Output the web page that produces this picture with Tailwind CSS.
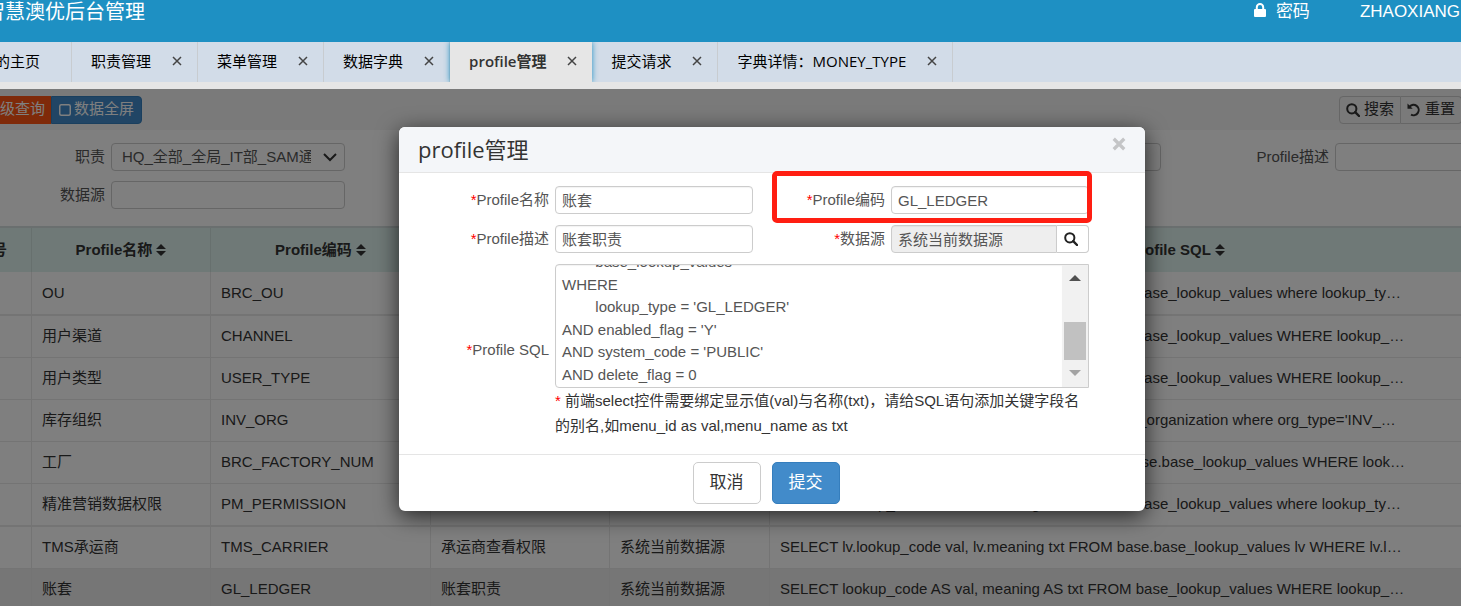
<!DOCTYPE html>
<html lang="zh-CN">
<head>
<meta charset="utf-8">
<title>profile管理</title>
<script src="https://cdn.jsdelivr.net/npm/@tailwindcss/browser@4"></script>
</head>
<body class="overflow-hidden bg-white font-['Liberation_Sans','Noto_Sans_CJK_SC',sans-serif] text-[15px] text-[#333]">
<svg class="hidden" aria-hidden="true">
  <symbol id="close" viewBox="0 0 10 10"><path d="M1 1l8 8M9 1L1 9" stroke="#444" stroke-width="1.5" fill="none"/></symbol>
  <symbol id="search" viewBox="0 0 14 14"><circle cx="5.8" cy="5.8" r="4.6" fill="none" stroke="currentColor" stroke-width="2"/><path d="M9.2 9.2l3.8 3.8" stroke="currentColor" stroke-width="2.4" stroke-linecap="round"/></symbol>
  <symbol id="sort" viewBox="0 0 10 12"><path d="M5 0l5 5H0zM5 12l5-5H0z" fill="currentColor"/></symbol>
</svg>
<div class="relative -ml-12 -mr-[123px] h-screen overflow-hidden">
  <header class="flex h-[42px] items-start justify-between bg-[#1e90c3] pl-[33px] pr-[124px] text-white">
    <h1 class="font-['Open_Sans','Noto_Sans_CJK_SC',sans-serif] text-xl leading-6">智慧澳优后台管理</h1>
    <nav class="flex items-center gap-[50px] text-[17px] leading-6">
      <a href="#" class="flex items-center gap-[10px]">
        <svg class="mb-1 h-[14px] w-3" viewBox="0 0 12 14" aria-hidden="true"><path d="M2.8 7V4.2a3.2 3.2 0 0 1 6.4 0V7" fill="none" stroke="white" stroke-width="2"/><rect y="6" width="12" height="8" rx="1" fill="white"/></svg>密码</a>
      <a href="#">ZHAOXIANG</a>
    </nav>
  </header>

  <nav class="flex h-10 bg-[#d2dce8] font-['Open_Sans','Noto_Sans_CJK_SC',sans-serif] text-black">
    <div class="flex items-center border-r border-[#c8ccd0] pb-0.5 pl-7 pr-[31px]"><a href="#">我的主页</a></div>
    <div class="flex items-center gap-[21px] border-r border-[#c8ccd0] pb-0.5 pl-[19px] pr-[15px]"><a href="#">职责管理</a><button aria-label="关闭"><svg class="size-[10px]"><use href="#close"/></svg></button></div>
    <div class="flex items-center gap-[21px] border-r border-[#c8ccd0] pb-0.5 pl-[19px] pr-[15px]"><a href="#">菜单管理</a><button aria-label="关闭"><svg class="size-[10px]"><use href="#close"/></svg></button></div>
    <div class="flex items-center gap-[21px] border-r border-[#c8ccd0] pb-0.5 pl-[19px] pr-[15px]"><a href="#">数据字典</a><button aria-label="关闭"><svg class="size-[10px]"><use href="#close"/></svg></button></div>
    <div class="relative flex items-center gap-[21px] bg-[#e6e6e6] pb-0.5 pl-[19px] pr-[15px] shadow-[0_0_6px_#1e90c3] [clip-path:inset(0_-8px)]"><a href="#" class="font-semibold text-[#333]">profile管理</a><button aria-label="关闭"><svg class="size-[10px]"><use href="#close"/></svg></button></div>
    <div class="flex items-center gap-[21px] border-r border-[#c8ccd0] pb-0.5 pl-[19px] pr-[15px]"><a href="#">提交请求</a><button aria-label="关闭"><svg class="size-[10px]"><use href="#close"/></svg></button></div>
    <div class="flex items-center gap-[21px] border-r border-[#c8ccd0] pb-0.5 pl-[19px] pr-[15px]"><a href="#">字典详情：MONEY_TYPE</a><button aria-label="关闭"><svg class="size-[10px]"><use href="#close"/></svg></button></div>
  </nav>
  <div class="h-[7px] bg-[#e6e6e6]"></div>

  <main class="relative h-[calc(100vh-89px)] overflow-hidden">
    <div class="flex h-[41px] items-center justify-between bg-[#f4f4f4] pl-6 pr-[122px]">
      <div class="flex h-7 text-white">
        <button class="bg-[#ff5513] pl-[9px] pr-[6px]">高级查询</button>
        <button class="flex items-center gap-[3px] rounded-r border border-[#357ebd] bg-[#428bca] px-[7px]"><svg class="size-3" viewBox="0 0 12 12" aria-hidden="true"><rect x=".75" y=".75" width="10.5" height="10.5" rx="1.5" fill="none" stroke="white" stroke-width="1.5"/></svg>数据全屏</button>
      </div>
      <div class="flex h-7">
        <button class="flex items-center gap-1 rounded-l border border-[#ccc] px-[6px]"><svg class="size-[14px]" aria-hidden="true"><use href="#search"/></svg>搜索</button>
        <button class="flex items-center gap-1 rounded-r border border-l-0 border-[#ccc] px-[6px]"><svg class="size-[14px]" viewBox="0 0 14 14" aria-hidden="true"><path d="M2.6 3.6A5.2 5.2 0 1 1 4 11.6" fill="none" stroke="currentColor" stroke-width="2"/><path d="M.5.5v5.2h5.2z" fill="currentColor"/></svg>重置</button>
      </div>
    </div>

    <form class="grid grid-cols-4 gap-y-[10px] bg-white pb-[17px] pt-[13px] text-[#555]">
      <div class="flex h-7 items-center gap-[6px] pr-[15px]">
        <label for="duty" class="w-[153px] shrink-0 text-right">职责</label>
        <div class="relative h-7 flex-1">
          <select id="duty" class="h-7 w-full appearance-none rounded border border-[#ccc] bg-white pl-[10px] pr-[33px]"><option>HQ_全部_全局_IT部_SAM通用职责</option></select>
          <svg class="pointer-events-none absolute right-2 top-[10px] h-[9px] w-[14px]" viewBox="0 0 14 9" aria-hidden="true"><path d="M1 1l6 6 6-6" fill="none" stroke="#333" stroke-width="2"/></svg>
        </div>
      </div>
      <div class="flex h-7 items-center gap-[6px] pr-[15px]"><label for="q-name" class="w-[153px] shrink-0 text-right">Profile名称</label><input id="q-name" class="h-7 w-full rounded border border-[#ccc] px-[6px]"></div>
      <div class="flex h-7 items-center gap-[6px] pr-[15px]"><label for="q-code" class="w-[153px] shrink-0 text-right">Profile编码</label><input id="q-code" class="h-7 w-full rounded border border-[#ccc] px-[6px]"></div>
      <div class="flex h-7 items-center gap-[6px] pr-[15px]"><label for="q-desc" class="w-[153px] shrink-0 text-right">Profile描述</label><input id="q-desc" class="h-7 w-full rounded border border-[#ccc] px-[6px]"></div>
      <div class="flex h-7 items-center gap-[6px] pr-[15px]"><label for="q-src" class="w-[153px] shrink-0 text-right">数据源</label><input id="q-src" class="h-7 w-full rounded border border-[#ccc] px-[6px]"></div>
    </form>

    <table class="w-full table-fixed border-collapse whitespace-nowrap bg-white [&_td]:border-l [&_td]:border-[#e9e9e9] [&_td]:px-[10px] [&_th]:border-l [&_th]:border-[#cfe0dd]">
      <colgroup><col class="w-[79px]"><col class="w-[179px]"><col class="w-[220px]"><col class="w-[179px]"><col class="w-[160px]"><col></colgroup>
      <thead>
        <tr class="h-[45px] border-t-2 border-[#d4dede] bg-[#def2ef] font-bold">
          <th>序号</th>
          <th>Profile名称 <svg class="inline h-3 w-[10px] align-[-1px]"><use href="#sort"/></svg></th>
          <th>Profile编码 <svg class="inline h-3 w-[10px] align-[-1px]"><use href="#sort"/></svg></th>
          <th>Profile描述 <svg class="inline h-3 w-[10px] align-[-1px]"><use href="#sort"/></svg></th>
          <th>数据源 <svg class="inline h-3 w-[10px] align-[-1px]"><use href="#sort"/></svg></th>
          <th>Profile SQL <svg class="inline h-3 w-[10px] align-[-1px]"><use href="#sort"/></svg></th>
        </tr>
      </thead>
      <tbody>
        <tr class="h-[43px] border-b-2 border-[#e9e9e9]"><td></td><td>OU</td><td>BRC_OU</td><td>OU</td><td>系统当前数据源</td><td>SELECT lookup_code AS val, meaning AS txt FROM base_lookup_values where lookup_ty…</td></tr>
        <tr class="h-[42px] border-b border-[#e9e9e9]"><td></td><td>用户渠道</td><td>CHANNEL</td><td>用户渠道</td><td>系统当前数据源</td><td>SELECT lookup_code AS val, meaning AS txt FROM base_lookup_values WHERE lookup_…</td></tr>
        <tr class="h-[42px] border-b border-[#e9e9e9]"><td></td><td>用户类型</td><td>USER_TYPE</td><td>用户类型</td><td>系统当前数据源</td><td>SELECT lookup_code AS val, meaning AS txt FROM base_lookup_values WHERE lookup_…</td></tr>
        <tr class="h-[42px] border-b border-[#e9e9e9]"><td></td><td>库存组织</td><td>INV_ORG</td><td>库存组织</td><td>系统当前数据源</td><td>SELECT org_code AS val, org_name as txt from base_organization where org_type='INV_…</td></tr>
        <tr class="h-[42px] border-b border-[#e9e9e9]"><td></td><td>工厂</td><td>BRC_FACTORY_NUM</td><td>工厂</td><td>系统当前数据源</td><td>SELECT lookup_code as val,meaning as txt FROM base.base_lookup_values WHERE look…</td></tr>
        <tr class="h-[43px] border-b-2 border-[#e9e9e9]"><td></td><td>精准营销数据权限</td><td>PM_PERMISSION</td><td>精准营销</td><td>系统当前数据源</td><td>SELECT lookup_code AS val, meaning AS txt FROM base_lookup_values where lookup_ty…</td></tr>
        <tr class="h-[42px] border-b border-[#e9e9e9]"><td></td><td>TMS承运商</td><td>TMS_CARRIER</td><td>承运商查看权限</td><td>系统当前数据源</td><td>SELECT lv.lookup_code val, lv.meaning txt FROM base.base_lookup_values lv WHERE lv.l…</td></tr>
        <tr class="h-[42px] border-b border-[#e9e9e9] bg-[#ececec]"><td></td><td>账套</td><td>GL_LEDGER</td><td>账套职责</td><td>系统当前数据源</td><td>SELECT lookup_code AS val, meaning AS txt FROM base_lookup_values WHERE lookup_…</td></tr>
      </tbody>
    </table>

    <div class="absolute inset-0 flex items-start justify-center bg-black/50 pl-2 pt-[38px]">
      <section role="dialog" aria-labelledby="dlg-title" class="w-[746px] rounded-md bg-white shadow-[0_5px_22px_rgba(0,0,0,0.7)]">
        <div class="flex h-[46px] items-start justify-between rounded-t-md border-b border-[#e5e5e5] bg-[#f4f6f9] pl-[19px] pr-[19px]">
          <h2 id="dlg-title" class="font-['Open_Sans','Noto_Sans_CJK_SC',sans-serif] text-[22px] leading-[44px]">profile管理</h2>
          <button aria-label="关闭" class="mt-[10px]"><svg class="size-[14px]" viewBox="0 0 12 12"><path d="M1.5 1.5l9 9M10.5 1.5l-9 9" stroke="#c4c5c7" stroke-width="2.8"/></svg></button>
        </div>
        <form class="flex flex-col gap-[11px] pb-4 pr-14 pt-[13px] text-[#555]">
          <div class="flex">
            <div class="flex flex-1 items-center gap-[6px]"><label for="name" class="w-[150px] text-right"><span class="text-[#f00]">*</span>Profile名称</label><input id="name" value="账套" class="h-7 w-0 flex-1 rounded border border-[#ccc] px-[6px] pb-0.5 inset-shadow-xs"></div>
            <div class="relative flex w-[336px] items-center gap-[6px]"><label for="code" class="w-[132px] text-right"><span class="text-[#f00]">*</span>Profile编码</label><input id="code" value="GL_LEDGER" class="h-7 w-0 flex-1 rounded border border-[#ccc] px-[6px] inset-shadow-xs">
              <div class="pointer-events-none absolute -bottom-[9px] -right-[3px] -top-[15px] left-[19px] rounded-[5px] border-5 border-[#ff1e12]"></div>
            </div>
          </div>
          <div class="flex">
            <div class="flex flex-1 items-center gap-[6px]"><label for="desc" class="w-[150px] text-right"><span class="text-[#f00]">*</span>Profile描述</label><input id="desc" value="账套职责" class="h-7 w-0 flex-1 rounded border border-[#ccc] px-[6px] pb-0.5 inset-shadow-xs"></div>
            <div class="flex w-[336px] items-center"><label for="src" class="mr-[6px] w-[132px] text-right"><span class="text-[#f00]">*</span>数据源</label><input id="src" readonly value="系统当前数据源" class="h-7 w-0 flex-1 rounded-l border border-[#ccc] bg-[#eee] px-[6px] pb-0.5 inset-shadow-xs"><button type="button" aria-label="选择数据源" class="flex h-7 w-8 items-center justify-center rounded-r border border-l-0 border-[#ccc] pr-1 text-[#222]"><svg class="size-[14px]"><use href="#search"/></svg></button></div>
          </div>
          <div class="flex gap-[6px]">
            <label for="sql" class="w-[150px] pt-[75px] text-right leading-[22px]"><span class="text-[#f00]">*</span>Profile SQL</label>
            <div class="flex-1">
              <div class="flex h-[124px] overflow-hidden rounded-l border border-[#ccc]">
                <textarea id="sql" class="h-full flex-1 resize-none overflow-hidden px-[6px] py-px leading-normal outline-none [tab-size:8] inset-shadow-xs">SELECT
	lookup_code AS val,
	meaning AS txt
FROM
	base_lookup_values
WHERE
	lookup_type = 'GL_LEDGER'
AND enabled_flag = 'Y'
AND system_code = 'PUBLIC'
AND delete_flag = 0</textarea>
                <div aria-hidden="true" class="flex w-[26px] flex-col items-center bg-[#f1f1f1]">
                  <svg class="mt-[10px] h-[6px] w-3" viewBox="0 0 12 6"><path d="M0 6l6-6 6 6z" fill="#505050"/></svg>
                  <div class="mt-[41px] h-[38px] w-[22px] bg-[#c1c1c1]"></div>
                  <svg class="mt-[10px] h-[6px] w-3" viewBox="0 0 12 6"><path d="M0 0l6 6 6-6z" fill="#a3a3a3"/></svg>
                </div>
              </div>
              <p class="leading-[25px] text-[#333]"><span class="text-[#f00]">*</span> 前端select控件需要绑定显示值(val)与名称(txt)，请给SQL语句添加关键字段名的别名,如menu_id as val,menu_name as txt</p>
            </div>
          </div>
        </form>
        <div class="flex justify-center gap-[11px] border-t border-[#e5e5e5] pb-[7px] pr-3 pt-[7px] text-[17px] leading-6">
          <button class="h-[42px] rounded-[5px] border border-[#ccc] px-4">取消</button>
          <button class="h-[42px] rounded-[5px] border border-[#357ebd] bg-[#428bca] px-4 text-white">提交</button>
        </div>
      </section>
    </div>
  </main>
</div>
<script>
  const sql = document.getElementById('sql');
  sql.scrollTop = sql.scrollHeight;
</script>
</body>
</html>
